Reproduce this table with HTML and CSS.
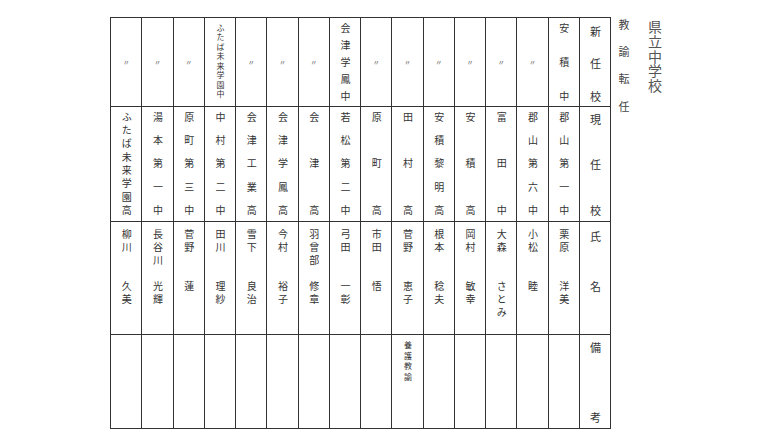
FILE: index.html
```html
<!DOCTYPE html>
<html lang="ja">
<head>
<meta charset="utf-8">
<title>県立中学校 教諭転任</title>
<link rel="stylesheet" href="styles.css">
</head>
<body>
<div class="page">
  <div class="sheet">
    <div class="cell hd new"><span class="v dist">新任校</span></div>
    <div class="cell hd cur"><span class="v dist">現任校</span></div>
    <div class="cell hd name"><span class="v">氏　　　名</span></div>
    <div class="cell hd note"><span class="v dist">備考</span></div>

    <div class="cell new"><span class="v dist">安積中</span></div>
    <div class="cell cur"><span class="v dist">郡山第一中</span></div>
    <div class="cell name"><span class="v">栗原　　洋美</span></div>
    <div class="cell note"></div>

    <div class="cell new ditto"><span class="dm">〃</span></div>
    <div class="cell cur"><span class="v dist">郡山第六中</span></div>
    <div class="cell name"><span class="v">小松　　睦</span></div>
    <div class="cell note"></div>

    <div class="cell new ditto"><span class="dm">〃</span></div>
    <div class="cell cur"><span class="v dist">富田中</span></div>
    <div class="cell name"><span class="v">大森　　さとみ</span></div>
    <div class="cell note"></div>

    <div class="cell new ditto"><span class="dm">〃</span></div>
    <div class="cell cur"><span class="v dist">安積高</span></div>
    <div class="cell name"><span class="v">岡村　　敏幸</span></div>
    <div class="cell note"></div>

    <div class="cell new ditto"><span class="dm">〃</span></div>
    <div class="cell cur"><span class="v dist">安積黎明高</span></div>
    <div class="cell name"><span class="v">根本　　稔夫</span></div>
    <div class="cell note"></div>

    <div class="cell new ditto"><span class="dm">〃</span></div>
    <div class="cell cur"><span class="v dist">田村高</span></div>
    <div class="cell name"><span class="v">菅野　　恵子</span></div>
    <div class="cell note"><span class="v small">養護教諭</span></div>

    <div class="cell new ditto"><span class="dm">〃</span></div>
    <div class="cell cur"><span class="v dist">原町高</span></div>
    <div class="cell name"><span class="v">市田　　悟</span></div>
    <div class="cell note"></div>

    <div class="cell new"><span class="v dist">会津学鳳中</span></div>
    <div class="cell cur"><span class="v dist">若松第二中</span></div>
    <div class="cell name"><span class="v">弓田　　一彰</span></div>
    <div class="cell note"></div>

    <div class="cell new ditto"><span class="dm">〃</span></div>
    <div class="cell cur"><span class="v dist">会津高</span></div>
    <div class="cell name"><span class="v">羽曾部　修章</span></div>
    <div class="cell note"></div>

    <div class="cell new ditto"><span class="dm">〃</span></div>
    <div class="cell cur"><span class="v dist">会津学鳳高</span></div>
    <div class="cell name"><span class="v">今村　　裕子</span></div>
    <div class="cell note"></div>

    <div class="cell new ditto"><span class="dm">〃</span></div>
    <div class="cell cur"><span class="v dist">会津工業高</span></div>
    <div class="cell name"><span class="v">雪下　　良治</span></div>
    <div class="cell note"></div>

    <div class="cell new"><span class="v dist tiny">ふたば未来学園中</span></div>
    <div class="cell cur"><span class="v dist">中村第二中</span></div>
    <div class="cell name"><span class="v">田川　　理紗</span></div>
    <div class="cell note"></div>

    <div class="cell new ditto"><span class="dm">〃</span></div>
    <div class="cell cur"><span class="v dist">原町第三中</span></div>
    <div class="cell name"><span class="v">菅野　　蓮</span></div>
    <div class="cell note"></div>

    <div class="cell new ditto"><span class="dm">〃</span></div>
    <div class="cell cur"><span class="v dist">湯本第一中</span></div>
    <div class="cell name"><span class="v">長谷川　光輝</span></div>
    <div class="cell note"></div>

    <div class="cell new ditto"><span class="dm">〃</span></div>
    <div class="cell cur"><span class="v dist">ふたば未来学園高</span></div>
    <div class="cell name"><span class="v">柳川　　久美</span></div>
    <div class="cell note"></div>
  </div>
  <div class="subtitle">教諭転任</div>
  <div class="title">県立中学校</div>
</div>
</body>
</html>
```
FILE: styles.css
```css
html, body {
  margin: 0;
  background: #fff;
}
body {
  font-family: "Noto Sans CJK JP", sans-serif;
  color: #333;
}
.page {
  display: flex;
  align-items: flex-start;
  padding: 17px 0 0 110px;
}
.sheet {
  display: grid;
  direction: rtl;
  grid-auto-flow: column;
  grid-template-rows: 88px 114px 112px 93px;
  grid-auto-columns: 1fr;
  width: 499px;
  gap: 1px;
  background: #333;
  border: 1px solid #333;
}
.cell {
  direction: ltr;
  background: #fff;
  display: flex;
  justify-content: center;
  align-items: flex-start;
}
.v {
  writing-mode: vertical-rl;
  font-size: 10px;
  line-height: 1;
}
.dist {
  text-align: justify;
  text-align-last: justify;
  text-justify: inter-character;
}
.new { padding-top: 5px; }
.new .dist { height: 78px; }
.new .tiny { font-size: 8px; height: 74px; margin-top: 1px; }
.cur { padding-top: 5px; }
.cur .dist { height: 103px; }
.name { padding-top: 7px; }
.name .v { letter-spacing: 3px; }
.note { padding-top: 6px; }
.small { font-size: 8px; letter-spacing: 2.6px; }
.ditto { align-items: center; padding-top: 0; }
.dm {
  font-size: 7px;
  line-height: 1;
  color: #555;
}
.hd .v { font-size: 11px; }
.hd.new { padding-top: 8px; }
.hd.new .dist { height: 76px; }
.hd.cur { padding-top: 7px; }
.hd.cur .dist { height: 102px; }
.hd.name { padding-top: 9px; }
.hd.name .v { letter-spacing: 1.5px; }
.hd.note { padding-top: 7px; }
.hd.note .dist { height: 81px; }
.subtitle {
  writing-mode: vertical-rl;
  font-size: 11px;
  line-height: 1;
  height: 93px;
  text-align: justify;
  text-align-last: justify;
  text-justify: inter-character;
  margin: 2px 0 0 7px;
  color: #444;
}
.title {
  writing-mode: vertical-rl;
  font-size: 14px;
  line-height: 1;
  letter-spacing: 0.7px;
  margin: 3px 0 0 19px;
  color: #555;
}
```
